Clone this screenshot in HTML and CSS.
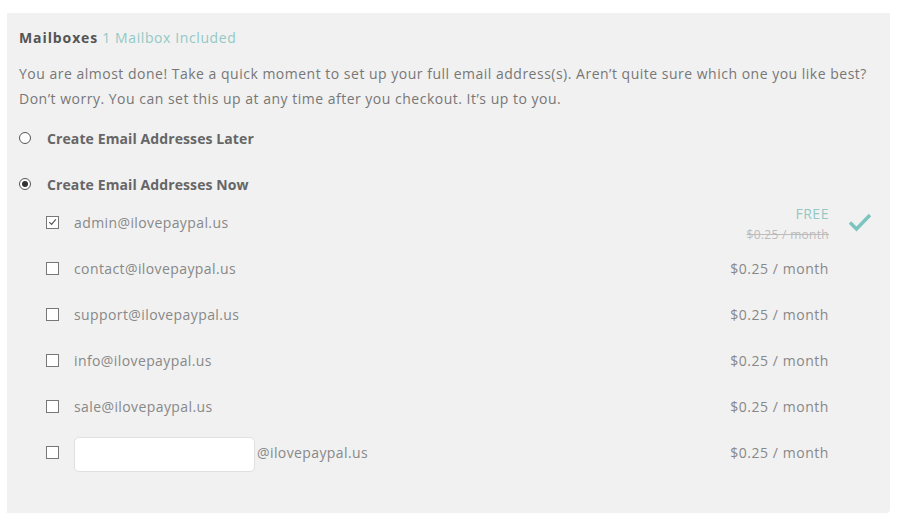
FILE: index.html
```html
<!DOCTYPE html>
<html>
<head>
<meta charset="utf-8">
<link rel="stylesheet" href="styles.css">
</head>
<body>
<div class="panel">
  <div class="title"><b>Mailboxes</b> <span class="incl">1 Mailbox Included</span></div>
  <p class="intro">You are almost done! Take a quick moment to set up your full email address(s). Aren’t quite sure which one you like best? Don’t worry. You can set this up at any time after you checkout. It’s up to you.</p>
  <div class="radios">
    <div class="radio-row"><span class="radio"></span><span class="rlabel">Create Email Addresses Later</span></div>
    <div class="radio-row"><span class="radio on"></span><span class="rlabel">Create Email Addresses Now</span></div>
  </div>
  <div class="list">
    <div class="row">
      <span class="cb checked"><svg viewBox="0 0 12 12" width="12" height="12"><path d="M2.5 6.2 L5 8.6 L9.6 3.2" fill="none" stroke="#555" stroke-width="1.3"/></svg></span>
      <span class="addr">admin@ilovepaypal.us</span>
      <span class="price free"><span class="freetxt">FREE</span><s class="old">$0.25 / month</s></span>
      <span class="tick"><svg viewBox="0 0 24 20" width="24" height="20"><path d="M2 10.5 L8.5 17 L22 3" fill="none" stroke="#7cc4bf" stroke-width="3.4" stroke-linejoin="miter"/></svg></span>
    </div>
    <div class="row"><span class="cb"></span><span class="addr">contact@ilovepaypal.us</span><span class="price">$0.25 / month</span><span class="tick"></span></div>
    <div class="row"><span class="cb"></span><span class="addr">support@ilovepaypal.us</span><span class="price">$0.25 / month</span><span class="tick"></span></div>
    <div class="row"><span class="cb"></span><span class="addr">info@ilovepaypal.us</span><span class="price">$0.25 / month</span><span class="tick"></span></div>
    <div class="row"><span class="cb"></span><span class="addr">sale@ilovepaypal.us</span><span class="price">$0.25 / month</span><span class="tick"></span></div>
    <div class="row"><span class="cb"></span><span class="addr custom"><input class="field" type="text"><span>@ilovepaypal.us</span></span><span class="price">$0.25 / month</span><span class="tick"></span></div>
  </div>
</div>
</body>
</html>
```
FILE: styles.css
```css
* { box-sizing: border-box; }
html, body { margin: 0; padding: 0; background: #fff; }
body {
  padding: 13px 8px 0 7px;
  font-family: "Open Sans", "Lato", sans-serif;
  color: #777;
  font-size: 14px;
  letter-spacing: 0.45px;
}
.panel {
  background: #f1f1f1;
  width: 883px;
  height: 500px;
  border-radius: 0 0 4px 0;
  padding: 15px 12px 0 12px;
}
.title { font-size: 14px; line-height: 20px; }
.title b { color: #555; font-weight: 700; letter-spacing: 0.9px; }
.incl { color: #93c9c5; letter-spacing: 0.6px; }
.intro {
  margin: 13px 0 0 0;
  line-height: 25px;
  color: #777;
  font-size: 14px;
  letter-spacing: 0.5px;
}
.radios { margin-top: 4px; }
.radio-row {
  display: flex;
  align-items: center;
  height: 46px;
}
.radio {
  width: 12px; height: 12px;
  border: 1px solid #555;
  border-radius: 50%;
  margin-right: 16px;
  position: relative;
  background: #fff;
  flex: none;
}
.radio.on::after {
  content: "";
  position: absolute;
  left: 2px; top: 2px;
  width: 6px; height: 6px;
  border-radius: 50%;
  background: #333;
}
.rlabel { font-weight: 700; color: #666; letter-spacing: 0.1px; }
.list { display: flex; flex-direction: column; margin-top: -8px; }
.row {
  display: flex;
  align-items: center;
  height: 46px;
  padding-left: 27px;
}
.cb {
  width: 13px; height: 13px;
  border: 1px solid #777;
  background: #fff;
  margin-right: 15px;
  display: flex;
  align-items: center;
  justify-content: center;
  flex: none;
}
.addr { flex: 1; color: #888; letter-spacing: 0.4px; }
.custom { display: flex; align-items: center; }
.field {
  width: 181px;
  height: 35px;
  border: 1px solid #e0e0e0;
  border-radius: 5px;
  background: #fff;
  margin: 4px 2px 0 0;
}
.price { color: #888; text-align: right; letter-spacing: 0.55px; }
.free { display: flex; flex-direction: column; align-items: flex-end; line-height: 18px; margin-top: 2px; }
.freetxt { color: #93c9c5; }
.old { font-size: 12px; color: #bbb; text-decoration: line-through; line-height: 14px; margin-top: 5px; letter-spacing: 0.3px; }
.tick { width: 49px; flex: none; display: flex; justify-content: flex-end; padding-right: 6px; }
```
